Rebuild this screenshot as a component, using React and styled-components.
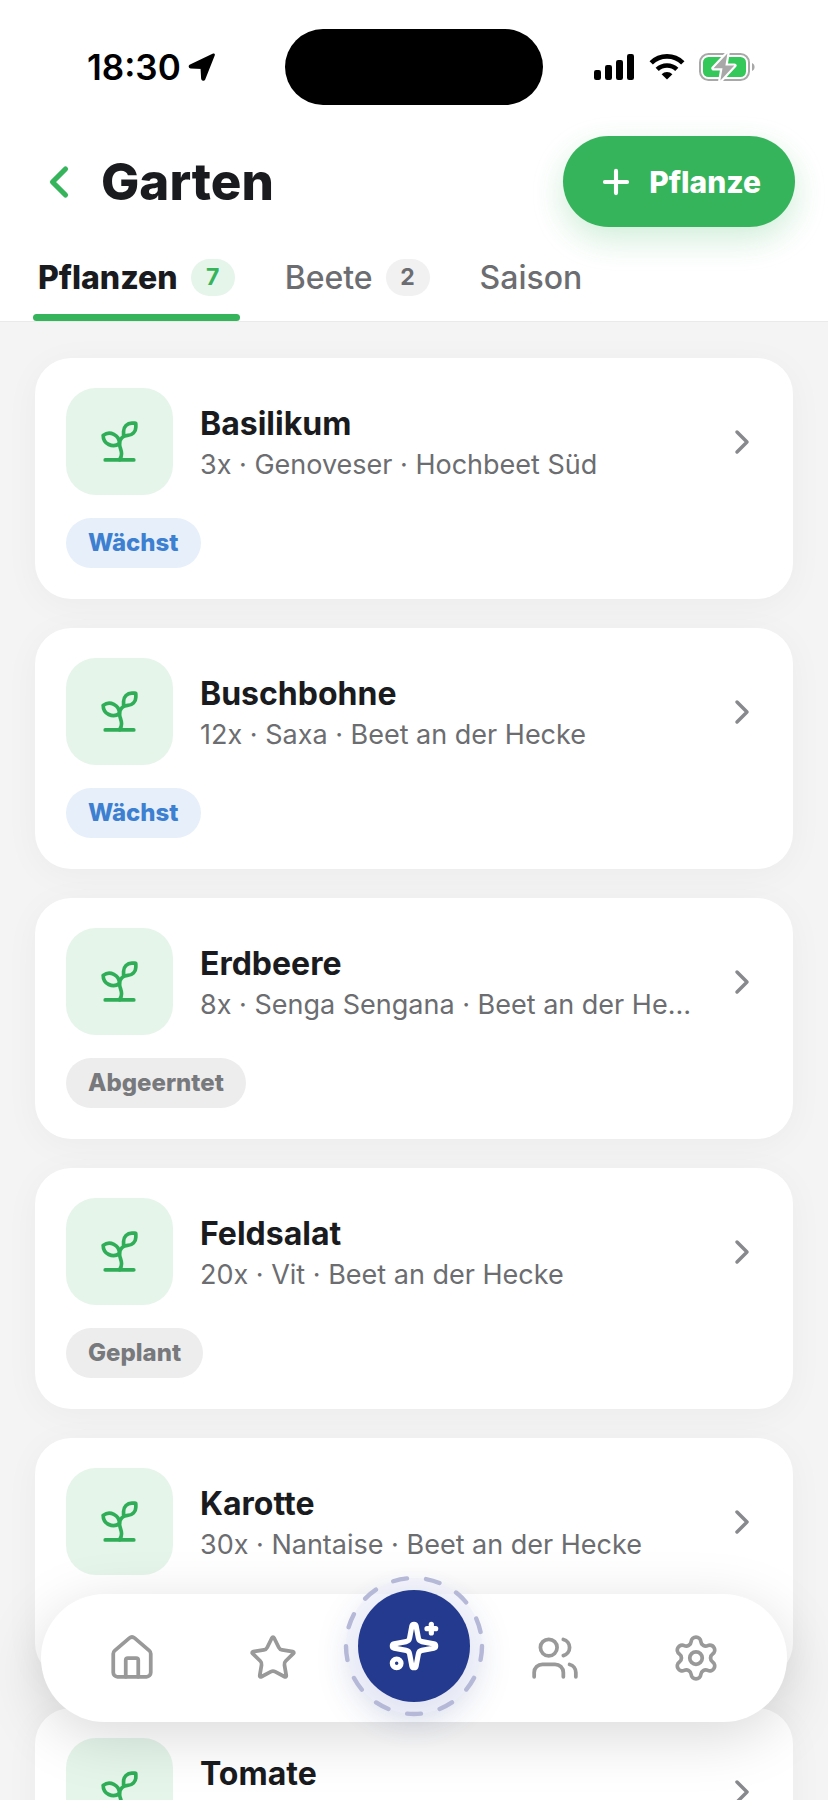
import React from "react";
import styled, { createGlobalStyle } from "styled-components";
import {
  ChevronLeft,
  ChevronRight,
  House,
  Plus,
  Settings,
  Sparkles,
  Sprout,
  Star,
  Users,
} from "lucide-react";

const green = "#35b45b";
const leafGreen = "#2fae57";
const paleGreen = "#e5f5ea";
const ink = "#1a1b1e";
const gray = "#6c6d71";
const lightGray = "#ededee";
const navGray = "#999999";
const navy = "#243a8e";

const GlobalStyle = createGlobalStyle`
  * {
    box-sizing: border-box;
  }
  body {
    margin: 0;
    background: #f4f4f4;
    font-family: Inter, "Liberation Sans", sans-serif;
    color: ${ink};
  }
  h1, h2, p {
    margin: 0;
  }
  button {
    font-family: inherit;
    border: none;
    background: none;
    padding: 0;
    color: inherit;
    cursor: pointer;
  }
  a {
    color: inherit;
    text-decoration: none;
  }
`;

const Screen = styled.div`
  display: flex;
  flex-direction: column;
  height: 100vh;
`;

const Header = styled.header`
  background-color: #ffffff;
  border-bottom: 1px solid #eaeaea;
`;

const StatusBar = styled.div`
  display: grid;
  grid-template-columns: 1fr 258px 1fr;
  align-items: center;
  padding-top: 29px;
`;

const StatusLeft = styled.div`
  display: flex;
  align-items: center;
  gap: 7px;
  padding-left: 87px;
`;

const StatusRight = styled.div`
  display: flex;
  align-items: center;
  justify-content: flex-end;
  gap: 14px;
  padding-right: 72px;
`;

const Time = styled.time`
  font-size: 35px;
  line-height: 40px;
  font-weight: 600;
  color: #000000;
`;

const Island = styled.div`
  height: 76px;
  border-radius: 38px;
  background-color: #000000;
`;

const TitleRow = styled.div`
  display: flex;
  align-items: center;
  gap: 16px;
  padding: 31px 33px 0;
`;

const BackButton = styled.button`
  display: flex;
  color: ${green};
`;

const Title = styled.h1`
  flex: 1;
  font-size: 51px;
  line-height: 60px;
  font-weight: 800;
`;

const AddButton = styled.button`
  display: flex;
  align-items: center;
  gap: 14px;
  height: 91px;
  padding: 0 34px;
  border-radius: 46px;
  background-color: ${green};
  color: #ffffff;
  font-size: 30px;
  font-weight: 800;
  box-shadow: 0 12px 32px rgba(53, 180, 91, 0.24);
`;

const Tabs = styled.nav`
  display: flex;
  gap: 40px;
  padding: 32px 33px 0;
`;

const Tab = styled.button`
  display: flex;
  flex-direction: column;
  gap: 18px;
  font-size: 32px;
  font-weight: ${({ $active }) => ($active ? 800 : 500)};
  color: ${({ $active }) => ($active ? ink : gray)};
  &::after {
    content: "";
    width: 100%;
    height: 7px;
    border-radius: 4px;
    background-color: ${({ $active }) => ($active ? green : "transparent")};
  }
`;

const TabLabel = styled.span`
  display: flex;
  align-items: center;
  gap: 13px;
  height: 37px;
  padding: 0 5px;
`;

const Count = styled.span`
  min-width: 44px;
  padding: 0 14px;
  border-radius: 19px;
  font-size: 23px;
  line-height: 37px;
  font-weight: 700;
  text-align: center;
  color: ${({ $active }) => ($active ? green : gray)};
  background-color: ${({ $active }) => ($active ? paleGreen : "#f1f1f2")};
`;

const List = styled.main`
  flex: 1;
  min-height: 0;
  overflow-y: auto;
  scrollbar-width: none;
  display: flex;
  flex-direction: column;
  gap: 29px;
  padding: 36px 35px 240px;
`;

const Card = styled.a`
  flex-shrink: 0;
  display: flex;
  flex-direction: column;
  align-items: flex-start;
  gap: 23px;
  padding: 30px 31px 31px;
  border-radius: 36px;
  background-color: #ffffff;
  box-shadow: 0 6px 36px rgba(0, 0, 0, 0.04);
`;

const CardRow = styled.div`
  display: flex;
  align-items: center;
  gap: 27px;
  width: 100%;
`;

const Tile = styled.div`
  flex-shrink: 0;
  display: flex;
  align-items: center;
  justify-content: center;
  width: 107px;
  height: 107px;
  border-radius: 30px;
  background-color: ${paleGreen};
  color: ${leafGreen};
`;

const CardText = styled.div`
  flex: 1;
  min-width: 0;
  padding-top: 3px;
`;

const PlantName = styled.h2`
  font-size: 32px;
  line-height: 44px;
  font-weight: 700;
`;

const Details = styled.p`
  font-size: 27px;
  line-height: 38px;
  color: ${gray};
  white-space: nowrap;
  overflow: hidden;
  text-overflow: ellipsis;
`;

const Arrow = styled(ChevronRight)`
  flex-shrink: 0;
  color: #88898c;
`;

const Chip = styled.span`
  padding: 0 22px;
  border-radius: 25px;
  font-size: 24px;
  line-height: 50px;
  font-weight: 800;
  color: ${({ $growing }) => ($growing ? "#3d7fd0" : "#78797c")};
  background-color: ${({ $growing }) => ($growing ? "#e6effa" : lightGray)};
`;

const BottomNav = styled.nav`
  position: fixed;
  left: 41px;
  right: 41px;
  bottom: 78px;
  display: grid;
  grid-template-columns: repeat(5, 1fr);
  grid-template-rows: 100%;
  align-items: center;
  height: 128px;
  padding: 0 20px;
  border-radius: 64px;
  background-color: #ffffff;
  box-shadow: 0 14px 60px rgba(0, 0, 0, 0.15);
`;

const NavItem = styled.a`
  display: flex;
  justify-content: center;
  color: ${navGray};
`;

const AssistantSlot = styled.div`
  display: flex;
  justify-content: center;
  padding-bottom: 24px;
`;

const AssistantButton = styled.button`
  position: relative;
  display: flex;
  align-items: center;
  justify-content: center;
  width: 112px;
  height: 112px;
  border-radius: 50%;
  background-color: ${navy};
  color: #ffffff;
  box-shadow: 0 0 0 12px rgba(236, 238, 250, 0.6),
    0 12px 40px rgba(36, 58, 142, 0.28);
`;

const DashedRing = styled.svg`
  position: absolute;
  inset: -16px;
`;

const plants = [
  { name: "Basilikum", details: "3x · Genoveser · Hochbeet Süd", status: "Wächst" },
  { name: "Buschbohne", details: "12x · Saxa · Beet an der Hecke", status: "Wächst" },
  { name: "Erdbeere", details: "8x · Senga Sengana · Beet an der Hecke", status: "Abgeerntet" },
  { name: "Feldsalat", details: "20x · Vit · Beet an der Hecke", status: "Geplant" },
  { name: "Karotte", details: "30x · Nantaise · Beet an der Hecke", status: "Wächst" },
  { name: "Tomate", details: "4x · Hochbeet Süd", status: "Wächst" },
];

const LocationIcon = () => (
  <svg width="28" height="30" viewBox="0 0 28 30" aria-hidden="true">
    <path
      d="M25.6 2.8 2.6 13.6c-1 .6-.8 1.4.2 1.5l11 .5.6 10.8c.1 1.2 1.2 1.4 1.7.4z"
      fill="#000"
      stroke="#000"
      strokeWidth="2.6"
      strokeLinejoin="round"
    />
  </svg>
);

const SignalIcon = () => (
  <svg width="41" height="26" viewBox="0 0 41 26" aria-hidden="true">
    <rect x="0" y="16" width="7" height="10" rx="2.2" />
    <rect x="11" y="11" width="7" height="15" rx="2.2" />
    <rect x="22" y="6" width="7" height="20" rx="2.2" />
    <rect x="33" y="0" width="7" height="26" rx="2.2" />
  </svg>
);

const WifiIcon = () => (
  <svg width="36" height="26" viewBox="0 0 36 26" fill="none" aria-hidden="true">
    <path d="M2.2 8.9a22.6 22.6 0 0 1 31.6 0" stroke="#000" strokeWidth="4.8" />
    <path d="M8.2 15.4a14.2 14.2 0 0 1 19.6 0" stroke="#000" strokeWidth="4.6" />
    <path d="M18 25.6l-5.4-5.4a7.8 7.8 0 0 1 10.8 0z" fill="#000" />
  </svg>
);

const BatteryIcon = () => (
  <svg width="57" height="30" viewBox="0 0 57 30" fill="none" aria-hidden="true">
    <rect x="1" y="2" width="49" height="26" rx="8.5" stroke="#a8a8a8" strokeWidth="2" />
    <path d="M53 11c3.4 1.2 3.4 6.8 0 8z" fill="#a8a8a8" />
    <rect x="4" y="5" width="43" height="20" rx="5.5" fill="#34c759" />
    <path
      d="M28.4 1.5 14.5 16.3h9L21.4 28.5 35.4 13.6h-9z"
      fill="#a8a8a8"
      stroke="#fff"
      strokeWidth="4.4"
      strokeLinejoin="round"
      paintOrder="stroke"
    />
  </svg>
);

const PlantCard = ({ name, details, status }) => (
  <Card href="#">
    <CardRow>
      <Tile>
        <Sprout size={49} strokeWidth={1.8} />
      </Tile>
      <CardText>
        <PlantName>{name}</PlantName>
        <Details>{details}</Details>
      </CardText>
      <Arrow size={40} strokeWidth={2.1} />
    </CardRow>
    <Chip $growing={status === "Wächst"}>{status}</Chip>
  </Card>
);

const App = () => {
  return (
    <Screen>
      <GlobalStyle />
      <Header>
        <StatusBar>
          <StatusLeft>
            <Time>18:30</Time>
            <LocationIcon />
          </StatusLeft>
          <Island />
          <StatusRight>
            <SignalIcon />
            <WifiIcon />
            <BatteryIcon />
          </StatusRight>
        </StatusBar>
        <TitleRow>
          <BackButton aria-label="Zurück">
            <ChevronLeft size={52} strokeWidth={2.4} />
          </BackButton>
          <Title>Garten</Title>
          <AddButton>
            <Plus size={38} strokeWidth={2.6} />
            Pflanze
          </AddButton>
        </TitleRow>
        <Tabs>
          <Tab $active>
            <TabLabel>
              Pflanzen <Count $active>7</Count>
            </TabLabel>
          </Tab>
          <Tab>
            <TabLabel>
              Beete <Count>2</Count>
            </TabLabel>
          </Tab>
          <Tab>
            <TabLabel>Saison</TabLabel>
          </Tab>
        </Tabs>
      </Header>
      <List>
        {plants.map((plant) => (
          <PlantCard key={plant.name} {...plant} />
        ))}
      </List>
      <BottomNav>
        <NavItem href="#" aria-label="Start">
          <House size={50} strokeWidth={1.8} />
        </NavItem>
        <NavItem href="#" aria-label="Favoriten">
          <Star size={50} strokeWidth={1.8} />
        </NavItem>
        <AssistantSlot>
          <AssistantButton aria-label="Assistent">
            <DashedRing width="144" height="144" viewBox="0 0 144 144" fill="none">
              <circle
                cx="72"
                cy="72"
                r="68"
                stroke="#b5b8d6"
                strokeWidth="4.4"
                strokeLinecap="round"
                strokeDasharray="14 19.2"
              />
            </DashedRing>
            <Sparkles size={52} strokeWidth={2.4} />
          </AssistantButton>
        </AssistantSlot>
        <NavItem href="#" aria-label="Familie">
          <Users size={50} strokeWidth={1.8} />
        </NavItem>
        <NavItem href="#" aria-label="Einstellungen">
          <Settings size={50} strokeWidth={1.8} />
        </NavItem>
      </BottomNav>
    </Screen>
  );
};

export default App;
